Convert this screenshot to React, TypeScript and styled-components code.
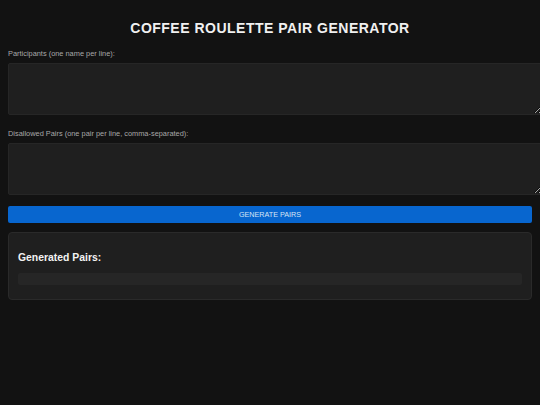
import React from "react";
import styled, { createGlobalStyle } from "styled-components";

const Global = createGlobalStyle`
  html, body {
    margin: 0;
    padding: 0;
    background: #121212;
    overflow: hidden;
  }
  body {
    font-family: "Liberation Sans", Arial, sans-serif;
    color: #e0e0e0;
  }
`;

const Page = styled.div`
  padding: 8px;
  min-height: 405px;
  box-sizing: border-box;
  background: #121212;
`;

const Title = styled.h1`
  margin: 10px 0 11px;
  font-size: 14px;
  line-height: 20px;
  font-weight: 700;
  letter-spacing: 0.5px;
  text-align: center;
  text-transform: uppercase;
  color: #f0f0f0;
`;

const Field = styled.div<{ $gap: number }>`
  display: flex;
  flex-direction: column;
  margin-bottom: ${(p) => p.$gap}px;
`;

const Label = styled.label`
  font-size: 7.4px;
  line-height: 9px;
  color: #a8a8a8;
  margin-bottom: 5px;
`;

const TextArea = styled.textarea`
  box-sizing: border-box;
  width: calc(100% + 11px);
  height: 52px;
  padding: 4px;
  margin: 0;
  background: #1f1f1f;
  border: 1px solid #262626;
  border-radius: 2px;
  color: #e0e0e0;
  font-family: "Liberation Sans", Arial, sans-serif;
  font-size: 8px;
  outline: none;
`;

const Button = styled.button`
  display: block;
  width: 100%;
  height: 17px;
  margin: 0 0 9px;
  padding: 0;
  border: none;
  border-radius: 2px;
  background: #0866cf;
  color: #d6e4f5;
  font-family: "Liberation Sans", Arial, sans-serif;
  font-size: 7.2px;
  text-transform: uppercase;
  cursor: pointer;
`;

const Results = styled.section`
  box-sizing: border-box;
  height: 68px;
  padding: 19px 9px 0;
  background: #1f1f1f;
  border: 1px solid #2a2a2a;
  border-radius: 4px;
`;

const ResultsTitle = styled.h3`
  margin: 0 0 9px;
  font-size: 10.4px;
  line-height: 12px;
  font-weight: 700;
  color: #f2f2f2;
`;

const PairList = styled.ul`
  margin: 0;
  padding: 0;
  height: 12px;
  list-style: none;
  background: #262626;
  border-radius: 2px;
`;

export default function App() {
  return (
    <>
      <Global />
      <Page>
        <Title>Coffee Roulette Pair Generator</Title>
        <Field $gap={14}>
          <Label htmlFor="participants">Participants (one name per line):</Label>
          <TextArea id="participants" />
        </Field>
        <Field $gap={11}>
          <Label htmlFor="disallowed">Disallowed Pairs (one pair per line, comma-separated):</Label>
          <TextArea id="disallowed" />
        </Field>
        <Button>Generate Pairs</Button>
        <Results>
          <ResultsTitle>Generated Pairs:</ResultsTitle>
          <PairList />
        </Results>
      </Page>
    </>
  );
}
